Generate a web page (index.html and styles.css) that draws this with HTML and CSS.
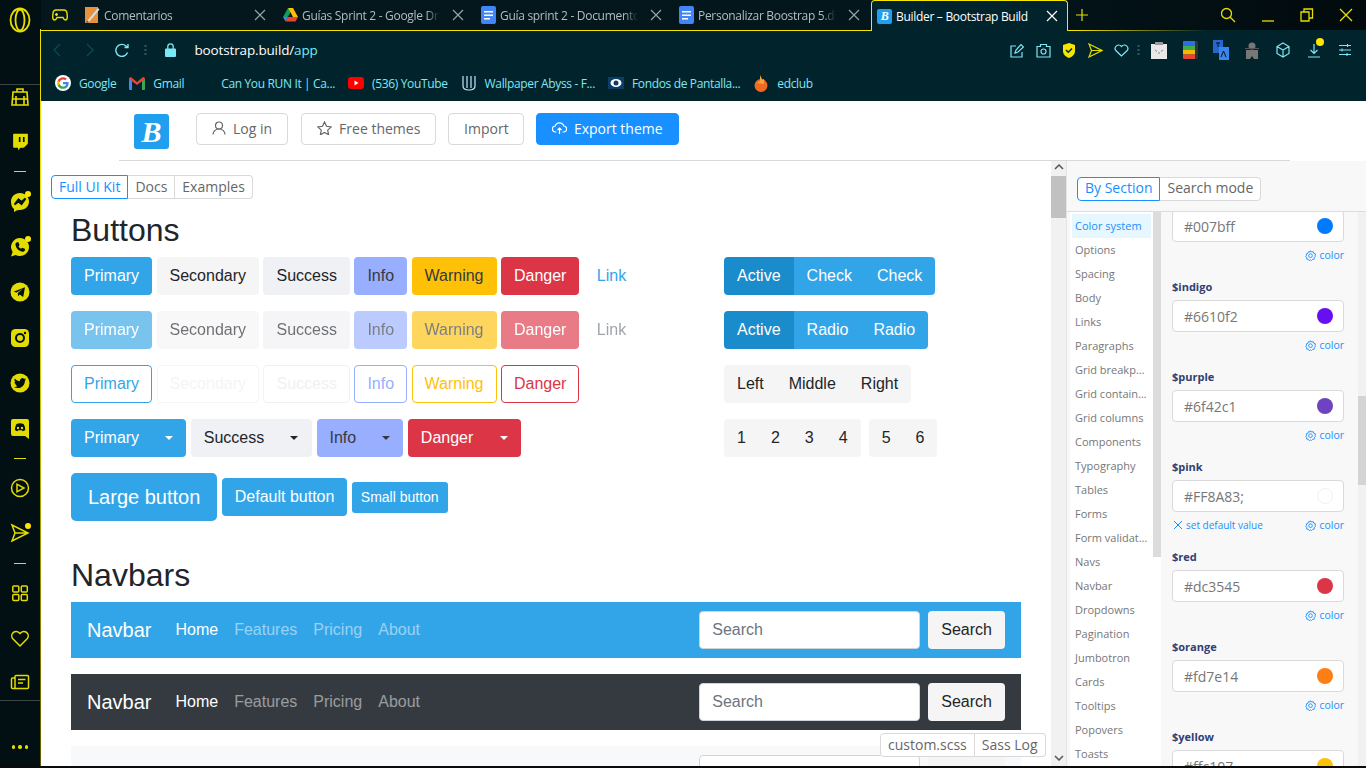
FILE: index.html
```html
<!DOCTYPE html>
<html lang="es">
  <head>
    <meta charset="utf-8">
    <title>Builder – Bootstrap Build</title>
    <link rel="stylesheet" href="styles.css">
  </head>
  <body>
    <div class="window">
      <!-- barra lateral de Opera GX -->
      <aside class="sidebar">
        <div class="side-logo">
          <svg width="22" height="26" viewBox="0 0 22 26" fill="none" stroke="#e8de00" stroke-width="1.800"><ellipse cx="11" cy="13" rx="9.500" ry="11.500"/><ellipse cx="11" cy="13" rx="4.500" ry="10.500"/></svg>
        </div>
        <div class="side-item side-first">
          <svg width="20" height="20" viewBox="0 0 20 20" fill="none" stroke="#e8de00" stroke-width="1.600"><path d="M7 5V2h6v3M3 5h14l1 13H2zM6 9v9M14 9v9M2 12h16"/></svg>
        </div>
        <div class="side-item">
          <svg width="17" height="18" viewBox="0 0 20 22"><path fill="#e3dc00" d="M2 1h17v12l-5 5h-4l-3 3v-3H2q-1 0-1-1V2q0-1 1-1z"/><path fill="#020f13" d="M8 5h2v6H8zM13 5h2v6h-2z"/></svg>
        </div>
        <div class="side-sep"></div>
        <div class="side-item">
          <svg width="20" height="20" viewBox="0 0 20 20"><path fill="#e3dc00" d="M10 1c5.300 0 9 3.700 9 8.500S15.300 18 10 18l-3 .2-3 1.800v-3C2 15.500 1 12.700 1 9.500 1 4.700 4.700 1 10 1z"/><path fill="none" stroke="#020f13" stroke-width="2" d="M4.500 12.500 8.500 7.500l3 2.500 4-3.500-4 5.500-3-2.500z"/></svg>
          <span class="dot"></span>
        </div>
        <div class="side-item">
          <svg width="20" height="20" viewBox="0 0 20 20"><path fill="#e3dc00" d="M10 1a9 9 0 1 1-4.300 16.900L1 19.500l1.600-4.500A9 9 0 0 1 10 1z"/><path fill="#020f13" d="M6.500 5.500 8.300 5l1.200 3-1 1.200c.5 1.200 1.300 2 2.500 2.500l1.200-1 3 1.200-.5 1.800c-.5.800-1.500 1.200-2.500 1-3.500-.7-6-3.200-6.700-6.700-.2-1 .2-2 1-2.500z"/></svg>
          <span class="dot"></span>
        </div>
        <div class="side-item">
          <svg width="20" height="20" viewBox="0 0 20 20"><circle cx="10" cy="10" r="9.500" fill="#e3dc00"/><path fill="#020f13" d="M3.500 9.800 15 5.200l-1.800 9.800-3.400-2.400-1.700 1.700-.3-3.200 5-4.300-6.200 3.700z"/></svg>
        </div>
        <div class="side-item">
          <svg width="20" height="20" viewBox="0 0 20 20"><rect x="1" y="1" width="18" height="18" rx="4.500" fill="#e3dc00"/><circle cx="10" cy="10" r="4" fill="none" stroke="#020f13" stroke-width="2"/><circle cx="15" cy="5" r="1.200" fill="#020f13"/></svg>
        </div>
        <div class="side-item">
          <svg width="20" height="20" viewBox="0 0 20 20"><circle cx="10" cy="10" r="9.500" fill="#e3dc00"/><path fill="#020f13" transform="translate(3.900 4) scale(.51)" d="M23.950 4.570a10 10 0 0 1-2.830.780 4.960 4.960 0 0 0 2.170-2.720c-.950.560-2 .960-3.130 1.200a4.920 4.920 0 0 0-8.390 4.490A14 14 0 0 1 1.640 3.160a4.930 4.930 0 0 0 1.520 6.570 4.900 4.900 0 0 1-2.230-.620v.060a4.920 4.920 0 0 0 3.950 4.830 5 5 0 0 1-2.210.080 4.940 4.940 0 0 0 4.600 3.420A9.870 9.870 0 0 1 0 19.540a14 14 0 0 0 7.560 2.210c9.050 0 14-7.500 14-13.980 0-.210 0-.420-.020-.630a10 10 0 0 0 2.460-2.550z"/></svg>
        </div>
        <div class="side-item">
          <svg width="20" height="22" viewBox="0 0 20 22"><path fill="#e3dc00" d="M3 1h14q2 0 2 2v18l-4-3H3q-2 0-2-2V3q0-2 2-2z"/><path fill="#020f13" d="M6.500 6c2.300-1 4.700-1 7 0 1.200 1.800 1.800 3.800 1.700 6-.8.700-1.600 1-2.500 1.200l-.7-1h-3.800l-.7 1c-1-.2-1.800-.5-2.500-1.200-.1-2.200.5-4.200 1.500-6z"/><circle cx="8" cy="10" r="1.200" fill="#e3dc00"/><circle cx="12" cy="10" r="1.200" fill="#e3dc00"/></svg>
        </div>
        <div class="side-sep"></div>
        <div class="side-item">
          <svg width="20" height="20" viewBox="0 0 20 20" fill="none" stroke="#e3dc00" stroke-width="1.500"><circle cx="10" cy="10" r="8.500"/><path d="M7 6.200v7.600l7-3.800z"/></svg>
        </div>
        <div class="side-item">
          <svg width="20" height="20" viewBox="0 0 20 20" fill="none" stroke="#e3dc00" stroke-width="1.500"><path d="M2 2l16 8-16 8 3-8zM5 10h13"/></svg>
          <span class="dot"></span>
        </div>
        <div class="side-sep"></div>
        <div class="side-item">
          <svg width="20" height="20" viewBox="0 0 20 20" fill="none" stroke="#e3dc00" stroke-width="1.500"><rect x="2.800" y="3" width="6" height="6" rx="1"/><rect x="11.300" y="3" width="6" height="6" rx="1"/><rect x="2.800" y="11.500" width="6" height="6" rx="1"/><rect x="11.300" y="11.500" width="6" height="6" rx="1"/></svg>
        </div>
        <div class="side-item">
          <svg width="20" height="20" viewBox="0 0 20 20" fill="none" stroke="#e3dc00" stroke-width="1.500"><path d="M10 18 2.600 10.500C-.5 6.500 5.500 0 10 5.500 14.500 0 20.500 6.500 17.400 10.500z"/></svg>
        </div>
        <div class="side-item">
          <svg width="20" height="20" viewBox="0 0 20 20" fill="none" stroke="#e3dc00" stroke-width="1.500"><path d="M5 5V3.500q0-1 1-1h11.500q1 0 1 1v11q0 1-1 1H2.500q-1 0-1-1V6q0-1 1-1H5v10.500M8 6.500h7.500M8 10h5"/></svg>
        </div>
        <div class="side-foot"><span></span><span></span><span></span></div>
      </aside>

      <div class="browser">
        <!-- pestañas -->
        <div class="tabstrip">
          <div class="gamepad">
            <svg width="16" height="14" viewBox="0 0 16 14" fill="none" stroke="#e8de00" stroke-width="1.400"><path d="M4 2h8q2.500 0 3 3l.3 4q0 3-2 3-1.300 0-2.300-2.500H5C4 12 3 12 2.700 12q-2 0-2-3L1 5q.5-3 3-3zM4.500 5v3M3 6.500h3M11 6h.01M12.500 7.500h.01"/></svg>
          </div>
          <div class="tab">
            <svg class="tab-icon" width="15" height="20" viewBox="0 0 15 20"><rect y="2" width="13" height="16" fill="#e8913a"/><path d="M2 16 13 3l1.500 1.500L4 17z" fill="#cfe0e8"/><path d="M1 18l1-2.500L4 17z" fill="#555"/></svg>
            <span class="tab-title">Comentarios</span>
            <svg class="tab-close" width="12" height="12" viewBox="0 0 12 12"><path d="M1 1l10 10M11 1 1 11"/></svg>
          </div>
          <div class="tab">
            <svg class="tab-icon" width="15" height="14" viewBox="0 0 15 14"><path fill="#0f9d58" d="M5 0h5L4.800 9H0z"/><path fill="#ffc107" d="M10 0l5 9h-5L5.200 0z"/><path fill="#ea4335" d="M15 9l-2.500 4.500H2.500L4.800 9z"/><path fill="#4285f4" d="M4.800 9 2.500 13.500 0 9z"/></svg>
            <span class="tab-title">Guías Sprint 2 - Google Dri</span>
            <svg class="tab-close" width="12" height="12" viewBox="0 0 12 12"><path d="M1 1l10 10M11 1 1 11"/></svg>
          </div>
          <div class="tab">
            <svg class="tab-icon" width="15" height="20" viewBox="0 0 15 20"><rect y="1" width="15" height="18" rx="2" fill="#4285f4"/><path fill="#fff" d="M3 6h9v1.600H3zM3 9.500h9v1.600H3zM3 13h6v1.600H3z"/></svg>
            <span class="tab-title">Guía sprint 2 - Documentos</span>
            <svg class="tab-close" width="12" height="12" viewBox="0 0 12 12"><path d="M1 1l10 10M11 1 1 11"/></svg>
          </div>
          <div class="tab">
            <svg class="tab-icon" width="15" height="20" viewBox="0 0 15 20"><rect y="1" width="15" height="18" rx="2" fill="#4285f4"/><path fill="#fff" d="M3 6h9v1.600H3zM3 9.500h9v1.600H3zM3 13h6v1.600H3z"/></svg>
            <span class="tab-title">Personalizar Boostrap 5.doc</span>
            <svg class="tab-close" width="12" height="12" viewBox="0 0 12 12"><path d="M1 1l10 10M11 1 1 11"/></svg>
          </div>
          <div class="tab tab-active">
            <span class="tab-logo">B</span>
            <span class="tab-title">Builder – Bootstrap Build</span>
            <svg class="tab-close" width="12" height="12" viewBox="0 0 12 12"><path d="M1 1l10 10M11 1 1 11"/></svg>
          </div>
          <svg class="tab-plus" width="12" height="12" viewBox="0 0 12 12"><path d="M6 0v12M0 6h12" stroke="#e8de00" stroke-width="1.200"/></svg>
          <div class="winctl">
            <svg width="16" height="16" viewBox="0 0 16 16" fill="none" stroke="#e8de00" stroke-width="1.300"><circle cx="6.500" cy="6.500" r="5"/><path d="M10 10l5 5"/></svg>
            <svg width="14" height="16" viewBox="0 0 14 16" fill="none" stroke="#e8de00" stroke-width="1.300"><path d="M1 14h12"/></svg>
            <svg width="14" height="16" viewBox="0 0 14 16" fill="none" stroke="#e8de00" stroke-width="1.300"><path d="M1 5h8v9H1zM4 5V2h8.500v9H9"/></svg>
            <svg width="14" height="16" viewBox="0 0 14 16" fill="none" stroke="#e8de00" stroke-width="1.300"><path d="M1 2l12 12M13 2 1 14"/></svg>
          </div>
        </div>

        <!-- barra de direcciones -->
        <div class="toolbar">
          <span class="nav-btn"><svg width="8" height="14" viewBox="0 0 8 14" fill="none" stroke="#0d4a56" stroke-width="1.300"><path d="M7 1 1 7l6 6"/></svg></span>
          <span class="nav-btn"><svg width="8" height="14" viewBox="0 0 8 14" fill="none" stroke="#0d4a56" stroke-width="1.300"><path d="M1 1l6 6-6 6"/></svg></span>
          <span class="nav-btn"><svg width="14" height="14" viewBox="0 0 14 14" fill="none" stroke="#7de8f5" stroke-width="1.400"><path d="M12.500 9.500A6 6 0 1 1 11 3l2 1.500M13 1v3.500H9.500"/></svg></span>
          <span class="tool-sep"></span>
          <svg class="lock" width="11" height="14" viewBox="0 0 11 14"><path fill="#7de8f5" d="M0 6.500q0-1 1-1h9q1 0 1 1V13q0 1-1 1H1q-1 0-1-1z"/><path fill="none" stroke="#7de8f5" stroke-width="1.300" d="M2.800 6V3.500a2.700 2.700 0 0 1 5.400 0V6"/></svg>
          <span class="url">bootstrap.build/<span class="url-path">app</span></span>
          <div class="tool-right">
            <span class="tool-icon"><svg width="14" height="15" viewBox="0 0 14 15" fill="none" stroke="#7de8f5" stroke-width="1.200"><path d="M6 3H1v11h11V9M5 10l1-3 5-5.500 2.500 2.500L8 9z"/></svg></span>
            <span class="tool-icon"><svg width="15" height="15" viewBox="0 0 15 15" fill="none" stroke="#7de8f5" stroke-width="1.200"><path d="M1 3.500h3.500V1.500h6v2H14V14H1z"/><circle cx="7.500" cy="8.500" r="2.500"/></svg></span>
            <span class="tool-icon"><svg width="12" height="15" viewBox="0 0 12 15"><path fill="#f5e600" d="M6 0l6 2v6c0 3.500-3 6-6 7-3-1-6-3.500-6-7V2z"/><path fill="none" stroke="#02232c" stroke-width="1.500" d="M3 7l2.300 2.300L9 5.500"/></svg></span>
            <span class="tool-icon"><svg width="15" height="15" viewBox="0 0 15 15" fill="none" stroke="#e3dc00" stroke-width="1.200"><path d="M1 1l13 6.500L1 14l2.500-6.500zM3.500 7.500H14"/></svg></span>
            <span class="tool-icon"><svg width="15" height="14" viewBox="0 0 15 14" fill="none" stroke="#7de8f5" stroke-width="1.200"><path d="M7.500 13 1.800 7.500C-.5 4.500 4 -.5 7.500 3.500 11 -.5 15.500 4.500 13.200 7.500z"/></svg></span>
            <span class="tool-sep tool-sep2"></span>
            <span class="ext-icon"><svg width="16" height="17" viewBox="0 0 16 17"><rect y="2" width="16" height="15" fill="#e8e8e8"/><rect x="4" width="8" height="3" fill="#999"/><path stroke="#888" fill="none" d="M4 8l2 1.500M12 8l-2 1.500M7 11h2"/></svg></span>
            <span class="ext-icon"><svg width="15" height="18" viewBox="0 0 15 18"><rect width="15" height="18" rx="1" fill="#333"/><path fill="#2c6fe0" d="M0 1q0-1 1-1h11v4.500H0z"/><path fill="#3fae49" d="M0 4.500h12V9H0z"/><path fill="#f5b800" d="M0 9h12v4.500H0z"/><path fill="#e84335" d="M0 13.500h12V18H1q-1 0-1-1z"/></svg></span>
            <span class="ext-icon"><svg width="16" height="20" viewBox="0 0 16 20"><rect width="10" height="13" fill="#2467d0"/><rect x="6" y="7" width="10" height="13" fill="#3a84ee"/><path stroke="#111" fill="none" d="M3 3h4M5 3v4M8 17l2.500-6 2.500 6"/></svg></span>
            <span class="ext-icon"><svg width="14" height="17" viewBox="0 0 14 17"><circle cx="7" cy="4" r="3.500" fill="#777"/><path fill="#777" d="M1 8h12v9H9l-2-3-2 3H1z"/><path stroke="#555" d="M0 6.500h14"/></svg></span>
            <span class="ext-icon"><svg width="14" height="16" viewBox="0 0 14 16" fill="none" stroke="#7de8f5" stroke-width="1.200"><path d="M7 1l6 3.500v7L7 15l-6-3.500v-7zM1 4.500 7 8l6-3.500M7 8v7"/></svg></span>
            <span class="ext-icon ext-dl"><svg width="14" height="15" viewBox="0 0 14 15" fill="none" stroke="#7de8f5" stroke-width="1.200"><path d="M7 1v9M3.500 7 7 10.500 10.500 7M1 14h12"/></svg><span class="dl-dot"></span></span>
            <span class="ext-icon"><svg width="14" height="14" viewBox="0 0 14 14" fill="none" stroke="#7de8f5" stroke-width="1.100"><path d="M1 2.500h12M1 7h12M1 11.500h12M9.500 1v3M4 5.500v3M9 10v3"/></svg></span>
          </div>
        </div>

        <!-- marcadores -->
        <div class="bookmarks">
          <span class="mark"><svg class="mark-icon" width="16" height="16" viewBox="0 0 24 24"><circle cx="12" cy="12" r="12" fill="#fff"/><g transform="translate(2.400 2.400) scale(.8)"><path fill="#4285f4" d="M22.560 12.250c0-.780-.070-1.530-.200-2.250H12v4.260h5.920c-.260 1.370-1.040 2.530-2.210 3.310v2.770h3.570c2.080-1.920 3.280-4.740 3.280-8.090z"/><path fill="#34a853" d="M12 23c2.970 0 5.460-.980 7.280-2.660l-3.570-2.770c-.980.660-2.230 1.060-3.710 1.060-2.860 0-5.290-1.930-6.160-4.530H2.180v2.840C3.990 20.530 7.700 23 12 23z"/><path fill="#fbbc05" d="M5.840 14.090c-.220-.660-.350-1.360-.350-2.090s.130-1.430.350-2.090V7.070H2.180C1.430 8.550 1 10.220 1 12s.430 3.450 1.180 4.930l3.660-2.840z"/><path fill="#ea4335" d="M12 5.380c1.620 0 3.060.560 4.210 1.640l3.150-3.150C17.450 2.090 14.970 1 12 1 7.700 1 3.990 3.470 2.180 7.070l3.660 2.840c.870-2.600 3.300-4.530 6.160-4.530z"/></g></svg>Google</span>
          <span class="mark"><svg class="mark-icon" width="16" height="13" viewBox="0 0 16 13"><path fill="#4285f4" d="M0 2h3v11H1q-1 0-1-1z"/><path fill="#34a853" d="M13 2h3v10q0 1-1 1h-2z"/><path fill="#ea4335" d="M0 2q0-2 2-2l6 5 6-5q2 0 2 2l-8 6z"/></svg>Gmail</span>
          <span class="mark"><span class="mark-icon"></span>Can You RUN It | Ca...</span>
          <span class="mark"><svg class="mark-icon" width="16" height="12" viewBox="0 0 16 12"><rect width="16" height="12" rx="3" fill="#f00"/><path fill="#fff" d="M6.500 3.500v5L10.500 6z"/></svg>(536) YouTube</span>
          <span class="mark"><svg class="mark-icon" width="14" height="16" viewBox="0 0 14 16" fill="none" stroke="#bfe9ff" stroke-width="1.200"><path d="M1 1v10q0 4 6 4t6-4V1M5 1v12M9 1v12"/></svg>Wallpaper Abyss - F...</span>
          <span class="mark"><svg class="mark-icon" width="16" height="12" viewBox="0 0 16 12"><rect width="16" height="12" fill="#0d3d66"/><ellipse cx="8" cy="6" rx="5.500" ry="4" fill="#fff"/><circle cx="8" cy="6" r="2.500" fill="#0d3d66"/></svg>Fondos de Pantalla...</span>
          <span class="mark"><svg class="mark-icon" width="16" height="18" viewBox="0 0 16 18"><circle cx="8" cy="11.500" r="6.500" fill="#f26a21"/><path fill="#f9a13a" d="M4 9l3-2V1l2.500 5L11 5v5z"/></svg>edclub</span>
        </div>

        <main class="page">
          <header class="site-head">
            <div class="site-head-inner">
              <span class="brand-logo">B</span>
              <a class="head-btn"><svg width="14" height="14" viewBox="0 0 14 14" fill="none" stroke="#666" stroke-width="1.200"><circle cx="7" cy="4.500" r="3.500"/><path d="M1 13.500c0-3 2.500-5.500 6-5.500s6 2.500 6 5.500"/></svg>Log in</a>
              <a class="head-btn"><svg width="15" height="14" viewBox="0 0 15 14" fill="none" stroke="#666" stroke-width="1.200"><path d="M7.500 1l2 4.300 4.700.6-3.500 3.200.9 4.600-4.100-2.300-4.100 2.300.9-4.600L.8 5.900l4.700-.6z"/></svg>Free themes</a>
              <a class="head-btn head-btn-import">Import</a>
              <a class="head-btn head-btn-primary"><svg width="15" height="13" viewBox="0 0 15 13" fill="none" stroke="#fff" stroke-width="1.200"><path d="M4.500 10H3.500a3 3 0 0 1-.3-6A4.500 4.500 0 0 1 11.800 4a3 3 0 0 1-.3 6h-1M7.500 12V6M5.500 8l2-2 2 2"/></svg>Export theme</a>
            </div>
          </header>

          <div class="workspace">
            <section class="preview">
              <div class="preview-body">
                <div class="seg seg-kit">
                  <span class="seg-item seg-on">Full UI Kit</span><span class="seg-item">Docs</span><span class="seg-item">Examples</span>
                </div>
                <div class="kit">
                  <h2>Buttons</h2>
                  <div class="btn-layout">
                    <div>
                      <div class="btn-row">
                        <a class="btn primary">Primary</a><a class="btn secondary">Secondary</a><a class="btn success">Success</a><a class="btn info">Info</a><a class="btn warning">Warning</a><a class="btn danger">Danger</a><a class="btn link">Link</a>
                      </div>
                      <div class="btn-row disabled">
                        <a class="btn primary">Primary</a><a class="btn secondary">Secondary</a><a class="btn success">Success</a><a class="btn info">Info</a><a class="btn warning">Warning</a><a class="btn danger">Danger</a><a class="btn link muted">Link</a>
                      </div>
                      <div class="btn-row">
                        <a class="btn o-primary">Primary</a><a class="btn o-secondary">Secondary</a><a class="btn o-success">Success</a><a class="btn o-info">Info</a><a class="btn o-warning">Warning</a><a class="btn o-danger">Danger</a>
                      </div>
                      <div class="btn-row">
                        <a class="btn primary">Primary<i class="caret"></i></a><a class="btn success">Success<i class="caret"></i></a><a class="btn info">Info<i class="caret"></i></a><a class="btn danger">Danger<i class="caret"></i></a>
                      </div>
                      <div class="btn-row btn-sizes">
                        <a class="btn primary lg">Large button</a><a class="btn primary">Default button</a><a class="btn primary sm">Small button</a>
                      </div>
                    </div>
                    <div>
                      <div class="btn-row">
                        <div class="btn-group"><a class="btn primary active">Active</a><a class="btn primary">Check</a><a class="btn primary">Check</a></div>
                      </div>
                      <div class="btn-row">
                        <div class="btn-group"><a class="btn primary active">Active</a><a class="btn primary">Radio</a><a class="btn primary">Radio</a></div>
                      </div>
                      <div class="btn-row">
                        <div class="btn-group"><a class="btn secondary">Left</a><a class="btn secondary">Middle</a><a class="btn secondary">Right</a></div>
                      </div>
                      <div class="btn-row pager-row">
                        <div class="btn-group"><a class="btn secondary">1</a><a class="btn secondary">2</a><a class="btn secondary">3</a><a class="btn secondary">4</a></div>
                        <div class="btn-group"><a class="btn secondary">5</a><a class="btn secondary">6</a></div>
                      </div>
                    </div>
                  </div>

                  <h2 class="h-navbars">Navbars</h2>
                  <nav class="navbar nb-primary">
                    <span class="nb-brand">Navbar</span>
                    <a class="nb-link nb-on">Home</a><a class="nb-link">Features</a><a class="nb-link">Pricing</a><a class="nb-link">About</a>
                    <form class="nb-form"><input class="nb-input" placeholder="Search"><a class="btn secondary">Search</a></form>
                  </nav>
                  <nav class="navbar nb-dark">
                    <span class="nb-brand">Navbar</span>
                    <a class="nb-link nb-on">Home</a><a class="nb-link">Features</a><a class="nb-link">Pricing</a><a class="nb-link">About</a>
                    <form class="nb-form"><input class="nb-input" placeholder="Search"><a class="btn secondary">Search</a></form>
                  </nav>
                  <nav class="navbar nb-light">
                    <form class="nb-form"><input class="nb-input" placeholder=""><a class="btn secondary"></a></form>
                  </nav>
                </div>
              </div>
              <div class="vscroll">
                <svg width="10" height="6" viewBox="0 0 10 6" fill="none" stroke="#555" stroke-width="1.500"><path d="M1 5l4-4 4 4"/></svg>
                <div class="vscroll-track"><div class="vscroll-thumb"></div></div>
                <svg width="10" height="6" viewBox="0 0 10 6" fill="none" stroke="#555" stroke-width="1.500"><path d="M1 1l4 4 4-4"/></svg>
              </div>
              <div class="seg seg-float"><span class="seg-item">custom.scss</span><span class="seg-item">Sass Log</span></div>
            </section>

            <aside class="settings">
              <div class="settings-top">
                <div class="seg">
                  <span class="seg-item seg-on">By Section</span><span class="seg-item">Search mode</span>
                </div>
              </div>
              <div class="settings-body">
                <ul class="sections">
                  <li class="section-on">Color system</li>
                  <li>Options</li>
                  <li>Spacing</li>
                  <li>Body</li>
                  <li>Links</li>
                  <li>Paragraphs</li>
                  <li>Grid breakpoints</li>
                  <li>Grid containers</li>
                  <li>Grid columns</li>
                  <li>Components</li>
                  <li>Typography</li>
                  <li>Tables</li>
                  <li>Forms</li>
                  <li>Form validation</li>
                  <li>Navs</li>
                  <li>Navbar</li>
                  <li>Dropdowns</li>
                  <li>Pagination</li>
                  <li>Jumbotron</li>
                  <li>Cards</li>
                  <li>Tooltips</li>
                  <li>Popovers</li>
                  <li>Toasts</li>
                </ul>
                <div class="sections-bar"><div class="sections-thumb"></div></div>
                <div class="vars">
                  <div class="var var-first">
                    <div class="var-input">#007bff<i class="swatch" style="background:#007bff"></i></div>
                    <div class="var-foot"><a class="var-color"><svg width="11" height="11" viewBox="0 0 12 12" fill="none" stroke="#1890ff"><path d="M6 .8l1.200 1.400 1.800-.4.600 1.800 1.800.6-.4 1.800L11.400 7 10 8.200l.1 1.800-1.800.2L7 11.600 6 10.800l-1.400.8-1-1.500-1.800-.2.200-1.800L.6 7l1.200-1-.4-1.800 1.800-.6.600-1.800 1.800.4z"/><circle cx="6" cy="6.200" r="2"/></svg>color</a></div>
                  </div>
                  <div class="var">
                    <label>$indigo</label>
                    <div class="var-input">#6610f2<i class="swatch" style="background:#6610f2"></i></div>
                    <div class="var-foot"><a class="var-color"><svg width="11" height="11" viewBox="0 0 12 12" fill="none" stroke="#1890ff"><path d="M6 .8l1.200 1.400 1.800-.4.600 1.800 1.800.6-.4 1.800L11.400 7 10 8.200l.1 1.800-1.800.2L7 11.600 6 10.800l-1.400.8-1-1.500-1.800-.2.200-1.800L.6 7l1.200-1-.4-1.800 1.800-.6.600-1.800 1.800.4z"/><circle cx="6" cy="6.200" r="2"/></svg>color</a></div>
                  </div>
                  <div class="var">
                    <label>$purple</label>
                    <div class="var-input">#6f42c1<i class="swatch" style="background:#6f42c1"></i></div>
                    <div class="var-foot"><a class="var-color"><svg width="11" height="11" viewBox="0 0 12 12" fill="none" stroke="#1890ff"><path d="M6 .8l1.200 1.400 1.800-.4.600 1.800 1.800.6-.4 1.800L11.400 7 10 8.200l.1 1.800-1.800.2L7 11.600 6 10.800l-1.400.8-1-1.500-1.800-.2.200-1.800L.6 7l1.200-1-.4-1.800 1.800-.6.600-1.800 1.800.4z"/><circle cx="6" cy="6.200" r="2"/></svg>color</a></div>
                  </div>
                  <div class="var">
                    <label>$pink</label>
                    <div class="var-input">#FF8A83;<i class="swatch swatch-empty"></i></div>
                    <div class="var-foot"><a class="var-reset"><svg width="10" height="10" viewBox="0 0 10 10" fill="none" stroke="#1890ff"><path d="M1 1l8 8M9 1 1 9"/></svg>set default value</a><a class="var-color"><svg width="11" height="11" viewBox="0 0 12 12" fill="none" stroke="#1890ff"><path d="M6 .8l1.200 1.400 1.800-.4.600 1.800 1.800.6-.4 1.800L11.400 7 10 8.200l.1 1.800-1.800.2L7 11.600 6 10.800l-1.400.8-1-1.500-1.800-.2.200-1.800L.6 7l1.200-1-.4-1.800 1.800-.6.600-1.800 1.800.4z"/><circle cx="6" cy="6.200" r="2"/></svg>color</a></div>
                  </div>
                  <div class="var">
                    <label>$red</label>
                    <div class="var-input">#dc3545<i class="swatch" style="background:#dc3545"></i></div>
                    <div class="var-foot"><a class="var-color"><svg width="11" height="11" viewBox="0 0 12 12" fill="none" stroke="#1890ff"><path d="M6 .8l1.200 1.400 1.800-.4.600 1.800 1.800.6-.4 1.800L11.400 7 10 8.200l.1 1.800-1.800.2L7 11.600 6 10.800l-1.400.8-1-1.500-1.800-.2.200-1.800L.6 7l1.200-1-.4-1.800 1.800-.6.600-1.800 1.800.4z"/><circle cx="6" cy="6.200" r="2"/></svg>color</a></div>
                  </div>
                  <div class="var">
                    <label>$orange</label>
                    <div class="var-input">#fd7e14<i class="swatch" style="background:#fd7e14"></i></div>
                    <div class="var-foot"><a class="var-color"><svg width="11" height="11" viewBox="0 0 12 12" fill="none" stroke="#1890ff"><path d="M6 .8l1.200 1.400 1.800-.4.600 1.800 1.800.6-.4 1.800L11.400 7 10 8.200l.1 1.800-1.800.2L7 11.600 6 10.800l-1.400.8-1-1.500-1.800-.2.200-1.800L.6 7l1.200-1-.4-1.800 1.800-.6.600-1.800 1.800.4z"/><circle cx="6" cy="6.200" r="2"/></svg>color</a></div>
                  </div>
                  <div class="var">
                    <label>$yellow</label>
                    <div class="var-input">#ffc107<i class="swatch" style="background:#ffc107"></i></div>
                  </div>
                </div>
                <div class="vars-bar"><div class="vars-thumb"></div></div>
              </div>
            </aside>
          </div>
        </main>
      </div>
    </div>
    <div class="taskbar"></div>
  </body>
</html>
```

FILE: styles.css
```css
* { box-sizing: border-box; }

html, body {
	margin: 0;
	padding: 0;
	height: 768px;
	overflow: hidden;
}
body {
	background: #000;
	font-family: "Liberation Sans", Arial, sans-serif;
	font-size: 16px;
	color: #212529;
}

.window { display: flex; height: 766px; }
.taskbar { height: 2px; background: #0b0b0b; }

/* barra lateral */
.sidebar {
	width: 41px;
	flex: none;
	display: flex;
	flex-direction: column;
	background: #020f13;
	border-right: 1px solid;
	border-image: linear-gradient(180deg, #020f13 30px, #e8de00 30px, #e8de00 300px, #5f5a00 100%) 1;
}
.side-logo {
	height: 85px;
	flex: none;
	padding: 7px 0 0 9px;
	border-bottom: 1px solid #3a4346;
}
.side-item {
	position: relative;
	height: 45.4px;
	flex: none;
	display: flex;
	align-items: center;
	justify-content: center;
}
.side-first { height: 24px; margin-bottom: 10.5px; }
.side-sep {
	height: 14px;
	flex: none;
	display: flex;
	align-items: center;
	justify-content: center;
}
.side-sep::before {
	content: "";
	width: 12px;
	height: 1px;
	background: #e3dc00;
}
.dot {
	position: absolute;
	top: 12px;
	right: 9px;
	width: 6px;
	height: 6px;
	border-radius: 50%;
	background: #ffe600;
}
.side-foot {
	margin-top: -6px;
	height: 65px;
	flex: none;
	border-top: 1px solid #3a4346;
	display: flex;
	justify-content: center;
	gap: 3px;
	padding-top: 44px;
}
.side-foot span {
	width: 3.5px;
	height: 3.5px;
	border-radius: 50%;
	background: #e3dc00;
}

.browser {
	flex: 1;
	min-width: 0;
	display: flex;
	flex-direction: column;
}

/* pestañas */
.tabstrip {
	height: 30px;
	flex: none;
	display: flex;
	align-items: center;
	background: linear-gradient(90deg, #03171d, #03161c 70%, #020a0d);
	font-family: "Open Sans", sans-serif;
	font-size: 12px;
	letter-spacing: -0.3px;
}
.gamepad {
	width: 36px;
	flex: none;
	padding-left: 11px;
	display: flex;
}
.tab {
	width: 198px;
	height: 30px;
	flex: none;
	display: flex;
	align-items: center;
	padding: 0 9px 0 8px;
	color: #b4bcbe;
}
.tab-icon { flex: none; width: 15px; margin-right: 4px; }
.tab-title {
	flex: 1;
	min-width: 0;
	margin-right: 12px;
	white-space: nowrap;
	overflow: hidden;
	-webkit-mask-image: linear-gradient(90deg, #000 90%, transparent);
	mask-image: linear-gradient(90deg, #000 90%, transparent);
}
.tab-close { flex: none; fill: none; stroke: #9aa2a4; stroke-width: 1.200; }
.tab-active {
	position: relative;
	z-index: 1;
	width: 197px;
	height: 31px;
	align-self: flex-start;
	margin-left: 2px;
	padding-left: 5px;
	padding-right: 9px;
	color: #fff;
	background: #01232c;
	border: 1px solid #f5e600;
	border-bottom: 0;
	border-radius: 4px 4px 0 0;
}
.tab-active .tab-close { stroke: #fff; }
.tab-active .tab-title { -webkit-mask-image: none; mask-image: none; }
.tab-logo {
	flex: none;
	width: 15px;
	height: 15px;
	margin-right: 4px;
	border-radius: 2px;
	background: #1f9fee;
	color: #fff;
	font: italic bold 12px/15px "Liberation Serif", serif;
	text-align: center;
}
.tab-plus { flex: none; margin-left: 8px; }
.winctl {
	margin-left: auto;
	display: flex;
	align-items: center;
	gap: 25px;
	padding-right: 13px;
}

/* barra de direcciones */
.toolbar {
	height: 39px;
	flex: none;
	display: flex;
	align-items: center;
	background: #01232c;
	border-top: 1px solid;
	border-image: linear-gradient(90deg, #f5e600 78%, transparent 88%) 1;
}
.nav-btn {
	width: 32.5px;
	flex: none;
	display: flex;
	justify-content: center;
}
.tool-sep {
	width: 14px;
	flex: none;
	height: 12px;
	background: radial-gradient(circle, #36545b 1px, transparent 1.300px) center / 3px 4px repeat-y;
}
.lock { margin-left: 12px; flex: none; }
.url {
	margin-left: 19px;
	font-family: "Open Sans", sans-serif;
	font-size: 13.5px;
	letter-spacing: -0.15px;
	color: #fff;
}
.url-path { color: #7de8f5; }
.tool-right {
	margin-left: auto;
	display: flex;
	align-items: center;
	padding-right: 5.5px;
}
.tool-icon {
	width: 26px;
	flex: none;
	display: flex;
	justify-content: center;
}
.tool-sep2 { width: 9.500px; }
.ext-icon {
	position: relative;
	width: 31px;
	flex: none;
	display: flex;
	justify-content: center;
}
.dl-dot {
	position: absolute;
	top: -5px;
	right: 6px;
	width: 8px;
	height: 8px;
	border-radius: 50%;
	background: #ffe600;
}

/* marcadores */
.bookmarks {
	height: 32px;
	flex: none;
	display: flex;
	align-items: center;
	gap: 13px;
	padding: 0 0 4px 14px;
	background: #01232c;
	font-family: "Open Sans", sans-serif;
	font-size: 12px;
	letter-spacing: -0.35px;
	color: #7de8f5;
}
.mark { display: flex; align-items: center; white-space: nowrap; }
.mark-icon { width: 16px; flex: none; margin-right: 8px; }

/* página */
.page {
	flex: 1;
	min-height: 0;
	display: flex;
	flex-direction: column;
	background: #fff;
}
.site-head { height: 60px; flex: none; padding: 0 76px 0 78px; }
.site-head-inner {
	height: 60px;
	display: flex;
	align-items: flex-start;
	gap: 13px;
	padding: 12px 0 0 15px;
	border-bottom: 1px solid #d9d9d9;
	font-family: "Open Sans", sans-serif;
	font-size: 14px;
}
.brand-logo {
	width: 35px;
	height: 35px;
	margin: 1px 14px 0 0;
	border-radius: 3px;
	background: #1f9fee;
	color: #fff;
	font: italic bold 30px/35px "Liberation Serif", serif;
	text-align: center;
}
.head-btn {
	height: 32px;
	display: flex;
	align-items: center;
	gap: 7px;
	padding: 0 15px 2px;
	border: 1px solid #d9d9d9;
	border-radius: 4px;
	color: #666;
}
.head-btn-import { padding: 0 14.75px 2px; margin-left: -1px; }
.head-btn-primary {
	background: #1890ff;
	border-color: #1890ff;
	color: #fff;
	margin-left: -1.5px;
}

.workspace { flex: 1; min-height: 0; display: flex; }
.preview {
	position: relative;
	width: 1026px;
	flex: none;
	display: flex;
	overflow: hidden;
}
.preview-body {
	flex: 1;
	min-width: 0;
	padding: 14px 0 0 10px;
}

/* botones segmentados */
.seg {
	display: inline-flex;
	height: 24px;
	background: #fff;
	border-radius: 4px;
	font-family: "Open Sans", sans-serif;
	font-size: 14px;
	color: #666;
}
.seg-item {
	display: flex;
	align-items: center;
	padding: 0 7px 2px;
	border: 1px solid #d9d9d9;
	border-left-width: 0;
}
.seg-item:first-child { border-left-width: 1px; border-radius: 4px 0 0 4px; }
.seg-item:last-child { border-radius: 0 4px 4px 0; }
.seg-on {
	color: #1890ff;
	border: 1px solid #1890ff;
}
.seg-kit { display: flex; width: max-content; }
.seg-float {
	position: absolute;
	top: 572px;
	left: 839px;
}

.kit { width: 950px; margin: 12px 0 0 20px; }
h2 {
	margin: 0 0 8px;
	font-size: 32px;
	font-weight: 400;
	line-height: 38px;
}
.h-navbars { margin-top: 35px; }
.btn-layout {
	display: grid;
	grid-template-columns: 653px 1fr;
}

/* botones */
.btn-row {
	display: flex;
	align-items: center;
	gap: 4.45px;
	margin-bottom: 16px;
}
.btn {
	display: inline-block;
	height: 38px;
	padding: 6px 12px;
	border: 1px solid transparent;
	border-radius: 4px;
	font-size: 16px;
	line-height: 24px;
	white-space: nowrap;
}
.primary { background: #32a5e8; color: #fff; }
.secondary { background: #f5f5f5; color: #212529; }
.success { background: #f0f1f5; color: #212529; }
.info { background: #98aeff; color: #343a40; }
.warning { background: #ffc107; color: #343a40; }
.danger { background: #dc3545; color: #fff; }
.link { color: #32a5e8; padding: 6px 12px; }
.disabled .btn { opacity: 0.65; }
.muted { color: #6c757d; }
.o-primary { border-color: #32a5e8; color: #32a5e8; }
.o-secondary { border-color: #f5f5f5; color: #f5f5f5; }
.o-success { border-color: #f0f1f5; color: #f0f1f5; }
.o-info { border-color: #98aeff; color: #98aeff; }
.o-warning { border-color: #ffc107; color: #ffc107; }
.o-danger { border-color: #dc3545; color: #dc3545; }
.caret {
	display: inline-block;
	margin-left: 26.2px;
	vertical-align: 3px;
	border-top: 4.8px solid;
	border-left: 4.8px solid transparent;
	border-right: 4.8px solid transparent;
}
.success .caret { margin-right: 0.7px; }
.lg { height: 48px; padding: 8px 16px; font-size: 20px; line-height: 30px; border-radius: 5px; }
.sm { height: 31px; padding: 4px 8px; font-size: 14px; line-height: 21px; border-radius: 3px; }
.btn-sizes { margin-bottom: 0; }

.btn-group { display: inline-flex; }
.btn-group .btn { border-radius: 0; }
.btn-group .btn + .btn { margin-left: -1px; }
.btn-group .btn:first-child { border-radius: 4px 0 0 4px; }
.btn-group .btn:last-child { border-radius: 0 4px 4px 0; }
.active { background: #1a8ccb; padding-right: 13px; }
.pager-row { gap: 8px; }

/* navbars */
.navbar {
	height: 56px;
	display: flex;
	align-items: center;
	padding: 0 16px;
	margin-bottom: 16px;
}
.nb-primary { background: #32a5e8; }
.nb-dark { background: #343a40; }
.nb-light { background: #f8f9fa; }
.nb-brand {
	margin-right: 16px;
	font-size: 20px;
	color: #fff;
}
.nb-link {
	padding: 0 8px;
	color: rgba(255, 255, 255, 0.5);
}
.nb-on { color: #fff; }
.nb-form { margin-left: auto; display: flex; gap: 8px; }
.nb-light .btn { width: 77px; }
.nb-input {
	width: 221px;
	height: 38px;
	padding: 0 12px;
	border: 1px solid #ced4da;
	border-radius: 4px;
	background: #fff;
	font-family: "Liberation Sans", Arial, sans-serif;
	font-size: 16px;
}
.nb-input::placeholder { color: #6c757d; opacity: 1; }

/* barra de desplazamiento */
.vscroll {
	width: 16px;
	flex: none;
	display: flex;
	flex-direction: column;
	align-items: center;
	gap: 5px;
	padding: 3px 0 5px;
	background: #f1f1f1;
	border-right: 1px solid #e4e4e4;
}
.vscroll-track { flex: 1; width: 100%; }
.vscroll-thumb { height: 42px; margin-top: 1px; background: #c1c1c1; }

/* panel de ajustes */
.settings {
	flex: 1;
	min-width: 0;
	display: flex;
	flex-direction: column;
	background: #f8f8f8;
	font-family: "Open Sans", sans-serif;
}
.settings-top {
	height: 51px;
	flex: none;
	padding: 15px 0 0 10px;
	border-bottom: 1px solid #ddd;
}
.settings-body { flex: 1; min-height: 0; display: flex; overflow: hidden; }
.sections {
	width: 83px;
	flex: none;
	margin: 0 0 0 3px;
	padding: 2px 2px 0;
	list-style: none;
	background: #fff;
	font-size: 11px;
	color: #777;
}
.sections li {
	height: 24px;
	line-height: 24px;
	padding: 0 1px 0 3px;
	white-space: nowrap;
	overflow: hidden;
	text-overflow: ellipsis;
}
.sections .section-on { background: #e6f7ff; color: #1890ff; }
.sections-bar { width: 8px; flex: none; background: #fff; }
.sections-thumb { height: 345px; background: #dcdcdc; }
.vars {
	flex: 1;
	min-width: 0;
	padding: 0 14px 0 11px;
	margin-top: -2px;
}
.var { height: 90px; }
.var-first { height: 67px; }
.var label {
	display: block;
	height: 23px;
	line-height: 20px;
	font-size: 11px;
	font-weight: 700;
	color: #2f4073;
}
.var-input {
	height: 32px;
	display: flex;
	align-items: center;
	justify-content: space-between;
	padding: 0 10.5px 0 11px;
	background: #fff;
	border: 1px solid #d9d9d9;
	border-radius: 4px;
	font-size: 14px;
	color: #777;
}
.swatch { width: 16px; height: 16px; border-radius: 50%; }
.swatch-empty { background: #fff; border: 1px solid #f0f0f0; }
.var-foot {
	height: 26px;
	display: flex;
	align-items: center;
	font-size: 10.5px;
	color: #1890ff;
}
.var-color { margin-left: auto; display: flex; align-items: center; gap: 3px; }
.var-reset { display: flex; align-items: center; gap: 3px; margin-left: 1px; font-size: 10px; }
.vars-bar { width: 8px; flex: none; background: #f1f1f1; }
.vars-thumb { height: 89px; margin-top: 184px; background: #d4d4d4; }
```
